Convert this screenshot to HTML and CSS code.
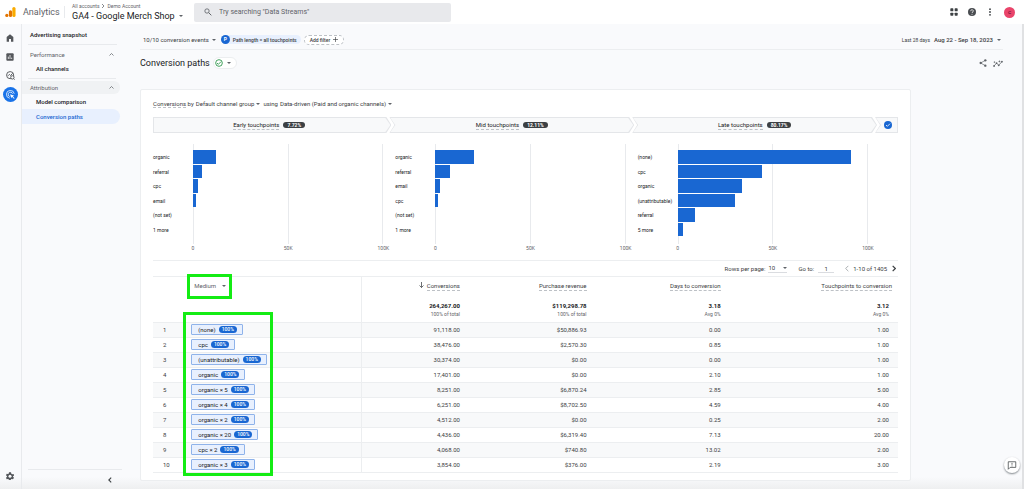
FILE: index.html
```
<!DOCTYPE html>
<html lang="en">
<head>
<meta charset="utf-8">
<title>Analytics - Conversion paths</title>
<link rel="stylesheet" href="styles.css">
</head>
<body>
<header class="topbar">
  <svg class="logo" viewBox="0 0 24 24"><rect x="16" y="1" width="7" height="22" rx="3.5" fill="#f9ab00"/><rect x="8.500" y="8" width="7" height="15" rx="3.500" fill="#e37400"/><circle cx="4" cy="19.500" r="3.500" fill="#e37400"/></svg>
  <span class="brand">Analytics</span>
  <div class="account">
    <span class="crumbs">All accounts <svg class="crumb-arrow" viewBox="0 0 8 8"><path d="M2 0l4 4-4 4" fill="none" stroke="#5f6368" stroke-width="1.500"/></svg> Demo Account</span>
    <button class="property">GA4 - Google Merch Shop<i class="caret"></i></button>
  </div>
  <label class="search">
    <svg class="icon8" viewBox="0 0 24 24"><circle cx="9" cy="9" r="6.500" fill="none" stroke="#5f6368" stroke-width="2.500"/><path d="M14 14l8 8" stroke="#5f6368" stroke-width="3"/></svg>
    <input type="text" aria-label="Search" placeholder="Try searching &quot;Data Streams&quot;">
  </label>
  <div class="top-actions">
    <button aria-label="Apps"><svg class="icon8" viewBox="0 0 24 24" fill="#3c4043"><rect x="1" y="1" width="9" height="9" rx="2"/><rect x="14" y="1" width="9" height="9" rx="2"/><rect x="1" y="14" width="9" height="9" rx="2"/><rect x="14" y="14" width="9" height="9" rx="2"/></svg></button>
    <button aria-label="Help"><svg class="icon8" viewBox="0 0 24 24"><circle cx="12" cy="12" r="12" fill="#4a4d51"/><path d="M8 9.500c0-6 8-5.500 8-.5 0 3-4 3-4 6" fill="none" stroke="#fff" stroke-width="2.300"/><circle cx="12" cy="18.500" r="1.500" fill="#fff"/></svg></button>
    <button aria-label="More"><svg class="icon8" viewBox="0 0 24 24" fill="#3c4043"><circle cx="12" cy="3.500" r="2.700"/><circle cx="12" cy="12" r="2.700"/><circle cx="12" cy="20.500" r="2.700"/></svg></button>
    <button class="avatar" aria-label="Account">c</button>
  </div>
</header>
<div class="shell">
  <nav class="rail">
    <a href="#" aria-label="Home"><svg class="icon8" viewBox="0 0 24 24"><path d="M12 1L2 9v14h7v-8h6v8h7V9z" fill="#54575b"/></svg></a>
    <a href="#" aria-label="Reports"><svg class="icon8" viewBox="0 0 24 24"><rect x="1" y="1" width="22" height="22" rx="3" fill="#54575b"/><path d="M7 11v7M12 6v12M17 14v4" stroke="#fff" stroke-width="2.300"/></svg></a>
    <a href="#" aria-label="Explore"><svg class="icon9" viewBox="0 0 24 24" fill="none" stroke="#54575b" stroke-width="2.500"><circle cx="11" cy="11" r="9.500"/><path d="M5 13l4-4 3 3 6-6"/><circle cx="17" cy="17" r="4.500" fill="#f9fafc"/><path d="M20 20l3 3"/></svg></a>
    <a href="#" class="rail-active" aria-label="Advertising"><svg class="icon9" viewBox="0 0 24 24" fill="none" stroke="#fff" stroke-width="2"><path d="M10 22A10.500 10.500 0 1 1 22 10M10 17.500A6 6 0 1 1 17.500 10"/><path d="M11 11l11 4-4 2 5 5-2 1-5-5-2 4z" fill="#fff" stroke="none"/></svg></a>
    <a href="#" class="rail-end" aria-label="Admin"><svg class="icon8" viewBox="0 0 24 24"><path d="M9 1h6l1 4 3 2 4-1 1 5-3 2v1l3 3-3 5-4-1-2 1-1 3H9l-1-3-2-1-4 1-2-5 3-3v-1L0 10l2-5 4 1 2-1z" fill="#54575b"/><circle cx="12" cy="12.500" r="4.500" fill="#f9fafc"/></svg></a>
  </nav>
  <aside class="sidebar">
    <a href="#" class="side-title">Advertising snapshot</a>
    <button class="group">Performance<svg class="chev" viewBox="0 0 10 6"><path d="M1 5l4-4 4 4" fill="none" stroke="#5f6368" stroke-width="1.500"/></svg></button>
    <a href="#" class="sub">All channels</a>
    <hr>
    <button class="group shaded">Attribution<svg class="chev" viewBox="0 0 10 6"><path d="M1 5l4-4 4 4" fill="none" stroke="#5f6368" stroke-width="1.500"/></svg></button>
    <a href="#" class="sub">Model comparison</a>
    <a href="#" class="sub current">Conversion paths</a>
    <button class="collapse" aria-label="Collapse menu"><svg viewBox="0 0 6 10"><path d="M5 1L1 5l4 4" fill="none" stroke="#3c4043" stroke-width="1.800"/></svg></button>
  </aside>
  <main>
    <div class="filters">
      <button class="events">10/10 conversion events<i class="caret"></i></button>
      <span class="filter-chip"><b>P</b>Path length = all touchpoints</span>
      <button class="add-filter">Add filter<svg viewBox="0 0 10 10"><path d="M5 0v10M0 5h10" stroke="#3c4043" stroke-width="1.300"/></svg></button>
      <button class="dates"><small>Last 28 days</small>Aug 22 - Sep 18, 2023<i class="caret"></i></button>
    </div>
    <div class="heading">
      <h1>Conversion paths</h1>
      <button class="status" aria-label="Data quality"><svg class="icon8" viewBox="0 0 24 24" fill="none" stroke="#1e8e3e" stroke-width="2.500"><circle cx="12" cy="12" r="10"/><path d="M6 12l4 4 8-8"/></svg><i class="caret"></i></button>
      <div class="tools">
        <button aria-label="Share"><svg class="icon8" viewBox="0 0 24 24"><path d="M19 4L5 12l14 8" fill="none" stroke="#5f6368" stroke-width="2"/><g fill="#5f6368"><circle cx="19" cy="4" r="3.500"/><circle cx="5" cy="12" r="3.500"/><circle cx="19" cy="20" r="3.500"/></g></svg></button>
        <button aria-label="Insights"><svg class="icon10" viewBox="0 0 28 24" fill="none" stroke="#5f6368" stroke-width="2"><path d="M3 19l7-8 6 6L25 7"/><g fill="#5f6368" stroke="none"><circle cx="3" cy="19" r="2.500"/><circle cx="10" cy="11" r="2.500"/><circle cx="16" cy="17" r="2.500"/><circle cx="25" cy="7" r="2.500"/><path d="M18 2l1 3 3 1-3 1-1 3-1-3-3-1 3-1zM4 5l1 2 2 1-2 1-1 2-1-2-2-1 2-1z"/></g></svg></button>
      </div>
    </div>
    <section class="card">
      <div class="model">
        <span><u>Conversions</u> by</span><button>Default channel group<i class="caret"></i></button><span class="using">using</span><button>Data-driven (Paid and organic channels)<i class="caret"></i></button>
      </div>
      <div class="funnel">
        <div class="stage first"><u>Early touchpoints</u><b>7.72%</b></div>
        <div class="stage"><u>Mid touchpoints</u><b>12.11%</b></div>
        <div class="stage"><u>Late touchpoints</u><b>80.17%</b></div>
        <div class="stage last"><svg class="icon8" viewBox="0 0 24 24"><circle cx="12" cy="12" r="12" fill="#1967d2"/><path d="M6 12l4 4 8-8" fill="none" stroke="#fff" stroke-width="2.500"/></svg></div>
      </div>
      <div class="charts">
        <div class="chart">
          <div class="names"><span>organic</span><span>referral</span><span>cpc</span><span>email</span><span>(not set)</span><span>1 more</span></div>
          <div class="plot"><i style="width:12.2%"></i><i style="width:4.5%"></i><i style="width:2.4%"></i><i style="width:1.4%"></i></div>
          <div class="axis"><span>0</span><span>50K</span><span>100K</span></div>
        </div>
        <div class="chart">
          <div class="names"><span>organic</span><span>referral</span><span>email</span><span>cpc</span><span>(not set)</span><span>1 more</span></div>
          <div class="plot"><i style="width:20.3%"></i><i style="width:7.6%"></i><i style="width:2.6%"></i><i style="width:1.5%"></i></div>
          <div class="axis"><span>0</span><span>50K</span><span>100K</span></div>
        </div>
        <div class="chart">
          <div class="names"><span>(none)</span><span>cpc</span><span>organic</span><span>(unattributable)</span><span>referral</span><span>5 more</span></div>
          <div class="plot"><i style="width:91%"></i><i style="width:44.5%"></i><i style="width:33.6%"></i><i style="width:30.3%"></i><i style="width:9.3%"></i><i style="width:2.9%"></i></div>
          <div class="axis"><span>0</span><span>50K</span><span>100K</span></div>
        </div>
      </div>
      <div class="pager">
        <label for="rows">Rows per page:</label>
        <span class="select"><select id="rows"><option>10</option><option>25</option></select><i class="caret"></i></span>
        <label for="goto">Go to:</label>
        <input id="goto" type="text" value="1">
        <button class="prev" aria-label="Previous page"><svg viewBox="0 0 6 10"><path d="M5 1L1 5l4 4" fill="none" stroke="#80868b" stroke-width="1"/></svg></button>
        <span>1-10 of 1405</span>
        <button class="next" aria-label="Next page"><svg viewBox="0 0 6 10"><path d="M1 1l4 4-4 4" fill="none" stroke="#3c4043" stroke-width="1.800"/></svg></button>
      </div>
      <div class="table-wrap">
        <table>
          <colgroup><col class="c-rank"><col class="c-path"><col class="c-conv"><col class="c-rev"><col class="c-days"><col></colgroup>
          <thead>
            <tr class="labels"><th></th><th class="path"><button>Medium<i class="caret"></i></button></th><th><svg class="sort" viewBox="0 0 10 12"><path d="M5 0v11M1 7l4 4 4-4" fill="none" stroke="#3c4043" stroke-width="1.500"/></svg><u>Conversions</u></th><th><u>Purchase revenue</u></th><th><u>Days to conversion</u></th><th><u>Touchpoints to conversion</u></th></tr>
            <tr class="totals"><td></td><td class="path"></td><td><b>264,267.00</b><small>100% of total</small></td><td><b>$119,298.78</b><small>100% of total</small></td><td><b>3.18</b><small>Avg 0%</small></td><td><b>3.12</b><small>Avg 0%</small></td></tr>
          </thead>
          <tbody>
            <tr><td>1</td><td class="path"><span class="chip">(none)<b>100%</b></span></td><td>91,118.00</td><td>$50,886.93</td><td>0.00</td><td>1.00</td></tr>
            <tr><td>2</td><td class="path"><span class="chip">cpc<b>100%</b></span></td><td>38,476.00</td><td>$2,570.30</td><td>0.85</td><td>1.00</td></tr>
            <tr><td>3</td><td class="path"><span class="chip">(unattributable)<b>100%</b></span></td><td>30,374.00</td><td>$0.00</td><td>0.00</td><td>1.00</td></tr>
            <tr><td>4</td><td class="path"><span class="chip">organic<b>100%</b></span></td><td>17,401.00</td><td>$0.00</td><td>2.10</td><td>1.00</td></tr>
            <tr><td>5</td><td class="path"><span class="chip">organic × 5<b>100%</b></span></td><td>8,251.00</td><td>$6,870.24</td><td>2.85</td><td>5.00</td></tr>
            <tr><td>6</td><td class="path"><span class="chip">organic × 4<b>100%</b></span></td><td>6,251.00</td><td>$8,702.50</td><td>4.59</td><td>4.00</td></tr>
            <tr><td>7</td><td class="path"><span class="chip">organic × 2<b>100%</b></span></td><td>4,512.00</td><td>$0.00</td><td>0.25</td><td>2.00</td></tr>
            <tr><td>8</td><td class="path"><span class="chip">organic × 20<b>100%</b></span></td><td>4,436.00</td><td>$6,319.40</td><td>7.13</td><td>20.00</td></tr>
            <tr><td>9</td><td class="path"><span class="chip">cpc × 2<b>100%</b></span></td><td>4,068.00</td><td>$740.80</td><td>13.02</td><td>2.00</td></tr>
            <tr><td>10</td><td class="path"><span class="chip">organic × 3<b>100%</b></span></td><td>3,854.00</td><td>$376.00</td><td>2.19</td><td>3.00</td></tr>
          </tbody>
        </table>
        <div class="mark mark-medium"></div>
        <div class="mark mark-paths"></div>
      </div>
    </section>
  </main>
</div>
<button class="feedback" aria-label="Send feedback"><svg class="icon10" viewBox="0 0 24 24"><path d="M2 22V2h20v15H7z" fill="none" stroke="#3c4043" stroke-width="2"/><path d="M12 5v5M12 12v2.500" stroke="#3c4043" stroke-width="2"/></svg></button>
</body>
</html>
```
FILE: styles.css
```
* { box-sizing: border-box; }
body {
  margin: 0;
  min-height: 100vh;
  display: flex;
  flex-direction: column;
  background: #f9fafc;
  color: #3c4043;
  font: 6px/8px Roboto, "Liberation Sans", sans-serif;
}
button, input, select {
  margin: 0;
  padding: 0;
  border: 0;
  background: none;
  color: inherit;
  font: inherit;
  appearance: none;
  outline: 0;
}
button { display: inline-flex; align-items: center; white-space: nowrap; }
a { color: inherit; text-decoration: none; }
u { text-decoration: none; border-bottom: 1px dashed #bdc1c6; }
svg { display: block; flex: none; }
.icon8 { width: 8px; height: 8px; }
.icon9 { width: 9px; height: 9px; }
.icon10 { width: 10px; height: 9px; }
.caret {
  flex: none;
  margin-left: 4px;
  border: 2px solid transparent;
  border-top-color: #5f6368;
  border-bottom: 0;
}

/* Top bar */
.topbar {
  height: 24px;
  display: flex;
  align-items: center;
  padding: 0 9px 0 5px;
  background: #fff;
}
.logo { width: 11px; height: 12px; }
.brand {
  width: 42px;
  margin-left: 7px;
  border-right: 1px solid #e8eaed;
  color: #5f6368;
  font-size: 9px;
  line-height: 12px;
}
.account { width: 129px; padding-left: 7px; }
.crumbs { display: flex; align-items: center; gap: 2px; font-size: 5px; line-height: 7px; color: #5f6368; }
.crumb-arrow { width: 4px; height: 4px; }
.property { font-size: 9px; line-height: 12px; color: #202124; }
.search {
  flex: 0 1 257px;
  height: 19px;
  display: flex;
  align-items: center;
  gap: 7px;
  padding: 0 10px;
  border-radius: 2px;
  background: #e8e9ec;
}
.search input { flex: 1; min-width: 0; font-size: 7px; }
.search input::placeholder { color: #5f6368; opacity: 1; }
.top-actions { display: flex; align-items: center; gap: 10px; margin-left: auto; }
.avatar {
  width: 11px;
  height: 11px;
  justify-content: center;
  border-radius: 50%;
  background: #e9446a;
  color: #5c1030;
}

/* Navigation */
.shell { flex: 1; display: flex; background: linear-gradient(transparent calc(100% - 12px), #eeeff0); }
.rail {
  width: 22px;
  display: flex;
  flex-direction: column;
  align-items: center;
  gap: 4px;
  padding: 6px 1px 6px 0;
  border-right: 1px solid #e8eaed;
}
.rail a { width: 15px; height: 15px; display: grid; place-items: center; border-radius: 50%; }
.rail .rail-active { background: #1a73e8; }
.rail .rail-end { margin-top: auto; }
.sidebar { width: 100px; display: flex; flex-direction: column; padding-top: 3px; font-weight: 500; }
.side-title {
  height: 18px;
  margin: 0 5px 0 6px;
  padding-left: 2px;
  border-bottom: 1px solid #e8eaed;
  line-height: 16px;
  color: #202124;
}
.group {
  height: 13px;
  justify-content: space-between;
  margin: 3px 2px 0 0;
  padding: 0 6px 0 8px;
  border-radius: 0 6px 6px 0;
  color: #5f6368;
  font-weight: 400;
}
.shaded { margin-top: 2px; background: #f0f2f4; }
.chev { width: 5px; height: 3px; }
.sub { height: 15px; margin-right: 2px; padding-left: 14px; line-height: 15px; border-radius: 0 8px 8px 0; color: #202124; }
.sidebar hr { width: 88px; height: 1px; margin: 2px 0 0 6px; border: 0; background: #e8eaed; }
.sidebar .current { background: #e8f0fe; color: #1967d2; }
.collapse {
  height: 20px;
  margin: auto 0 0 6px;
  padding-right: 10px;
  justify-content: flex-end;
  border-top: 1px solid #e8eaed;
}
.collapse svg { width: 4px; height: 6px; }

/* Report header */
main { flex: 1; min-width: 0; padding: 0 19px 8px 18px; border-right: 2px solid #e0e1e3; }
.filters {
  height: 26px;
  display: flex;
  align-items: center;
  padding: 6px 2px 0 3px;
  border-bottom: 1px solid #eceef0;
}
.events .caret { margin-left: 3px; }
.filter-chip {
  display: flex;
  align-items: center;
  gap: 3px;
  margin-left: 5px;
  padding-right: 4px;
  border-radius: 5px;
  background: #e8f0fe;
  font-size: 5px;
  font-weight: 500;
}
.filter-chip b {
  width: 9px;
  height: 9px;
  border-radius: 50%;
  background: #1967d2;
  color: #fff;
  line-height: 9px;
  text-align: center;
}
.add-filter {
  height: 10px;
  gap: 3px;
  margin-left: 3px;
  padding: 0 5px;
  border: 1px dashed #bdc1c6;
  border-radius: 5px;
  background: #fff;
  font-size: 5px;
  font-weight: 500;
}
.add-filter svg { width: 5px; height: 5px; }
.dates { margin-left: auto; font-weight: 500; }
.dates small { margin-right: 4px; font-size: 5px; font-weight: 400; }
.heading { height: 26px; display: flex; align-items: center; }
h1 { margin: 0; font-size: 9px; line-height: 12px; font-weight: 400; color: #202124; }
.status { height: 12px; margin-left: 3px; padding: 0 5px 0 1px; border: 1px solid #eceef0; border-radius: 6px; background: #fff; }
.tools { display: flex; gap: 6px; margin-left: auto; }
.card {
  width: calc(100% - 92px);
  margin-top: 13px;
  padding: 0 12px 7px;
  border: 1px solid #eceef0;
  border-radius: 2px;
  background: #fff;
}
.model { height: 27px; display: flex; align-items: center; gap: 2px; }
.model .caret { margin-left: 2px; }
.using { margin-left: 1px; }

/* Stages */
.funnel { display: flex; height: 16px; }
.stage {
  flex: 1;
  position: relative;
  z-index: 0;
  display: flex;
  align-items: center;
  justify-content: center;
  gap: 4px;
  margin-left: -2px;
  background: #e4e6e9;
  clip-path: polygon(0 0, calc(100% - 5px) 0, 100% 50%, calc(100% - 5px) 100%, 0 100%, 5px 50%);
  color: #202124;
}
.stage::before {
  content: "";
  position: absolute;
  z-index: -1;
  inset: 1px;
  background: #f8f9fa;
  clip-path: polygon(0 0, calc(100% - 5px) 0, 100% 50%, calc(100% - 5px) 100%, 0 100%, 5px 50%);
}
.stage b { padding: 0 4px; border-radius: 3px; background: #3c4043; color: #fff; font-size: 5px; line-height: 6px; }
.first { flex: 0 0 32%; margin-left: 0; padding-right: 6px; }
.first, .first::before { clip-path: polygon(0 0, calc(100% - 5px) 0, 100% 50%, calc(100% - 5px) 100%, 0 100%); }
.last { flex: 0 0 23px; padding-left: 2px; }
.last, .last::before { clip-path: polygon(0 0, 100% 0, 100% 100%, 0 100%, 5px 50%); }

/* Bar charts */
.charts { display: grid; grid-template-columns: repeat(3, 1fr); margin-top: 11px; padding-right: 18px; }
.chart { display: grid; grid-template: 100px 16px / 40px 1fr; padding-right: 12px; }
.names, .plot { display: grid; grid-template-rows: repeat(6, 1fr); padding: 6px 0 7px; }
.names { align-items: center; color: #202124; font-size: 5px; }
.plot {
  background:
    linear-gradient(#e8eaed, #e8eaed) 0 0 / 1px 100% no-repeat,
    linear-gradient(#e8eaed, #e8eaed) 50% 0 / 1px 100% no-repeat,
    linear-gradient(#e8eaed, #e8eaed) 100% 0 / 1px 100% no-repeat;
}
.plot i { margin-bottom: 1px; background: #1967d2; }
.axis { grid-column: 2; display: flex; justify-content: space-between; margin: 0 -10px; font-size: 5px; color: #5f6368; }
.axis span { width: 20px; text-align: center; }

/* Pager */
.pager {
  height: 17px;
  display: flex;
  align-items: center;
  justify-content: flex-end;
  border: 1px solid #eceef0;
  border-width: 1px 0;
}
.select { width: 19px; display: flex; align-items: center; justify-content: space-between; margin: 0 11px 0 3px; border-bottom: 1px solid #dadce0; }
.pager select { width: 12px; }
.pager input { width: 16px; height: 9px; margin: 0 11px 0 4px; border-bottom: 1px solid #dadce0; text-align: center; }
.pager svg { width: 4px; height: 7px; }
.prev { margin-right: 4px; }
.next { margin: 0 2px 0 5px; }

/* Paths table */
.table-wrap { position: relative; }
table { width: 100%; table-layout: fixed; border-collapse: collapse; }
.c-rank { width: 5%; }
.c-path { width: 23%; }
.c-conv { width: 14%; }
.c-rev { width: 17%; }
.c-days { width: 18%; }
th, td { height: 15px; padding: 0 6px 0 0; text-align: right; vertical-align: middle; font-weight: 400; white-space: nowrap; }
td:last-child { padding-right: 9px; }
td:first-child { padding-left: 10px; text-align: left; }
.path { padding-left: 1px; border-right: 1px solid #eceef0; text-align: left; }
.labels th { height: 18px; }
.labels .path { padding-left: 4px; }
.labels .caret { margin-left: 6px; }
.labels button { color: #5f6368; }
.labels u { display: inline-block; }
.sort { display: inline-block; width: 5px; height: 6px; margin-right: 3px; }
.totals td { height: 27px; padding-top: 4px; }
.totals b, .totals small { display: block; }
.totals b { color: #202124; }
.totals small { color: #5f6368; font-size: 5px; }
tbody tr { border-top: 1px solid #eceef0; }
tbody tr:last-child { border-bottom: 1px solid #eceef0; }
tbody tr:nth-child(odd) { background: #f8f9fa; }
.chip {
  display: inline-flex;
  align-items: center;
  gap: 3px;
  height: 11px;
  padding: 0 5px 0 6px;
  border: 1px solid #8fb3ea;
  border-radius: 1px;
  background: #e8f0fe;
  color: #202124;
  vertical-align: middle;
}
.chip b { padding: 0 3px; border-radius: 4px; background: #1967d2; color: #fff; font-size: 5px; line-height: 7px; font-weight: 500; }
.mark { position: absolute; border: 3px solid #14ec14; pointer-events: none; }
.mark-medium { left: 34px; top: -3px; width: 45px; height: 25px; }
.mark-paths { left: 30px; top: 35px; width: 90px; height: 164px; }

.feedback {
  position: fixed;
  right: 4px;
  bottom: 16px;
  width: 16px;
  height: 16px;
  justify-content: center;
  border-radius: 50%;
  background: #fff;
  box-shadow: 0 1px 2px #80868b;
}
```
